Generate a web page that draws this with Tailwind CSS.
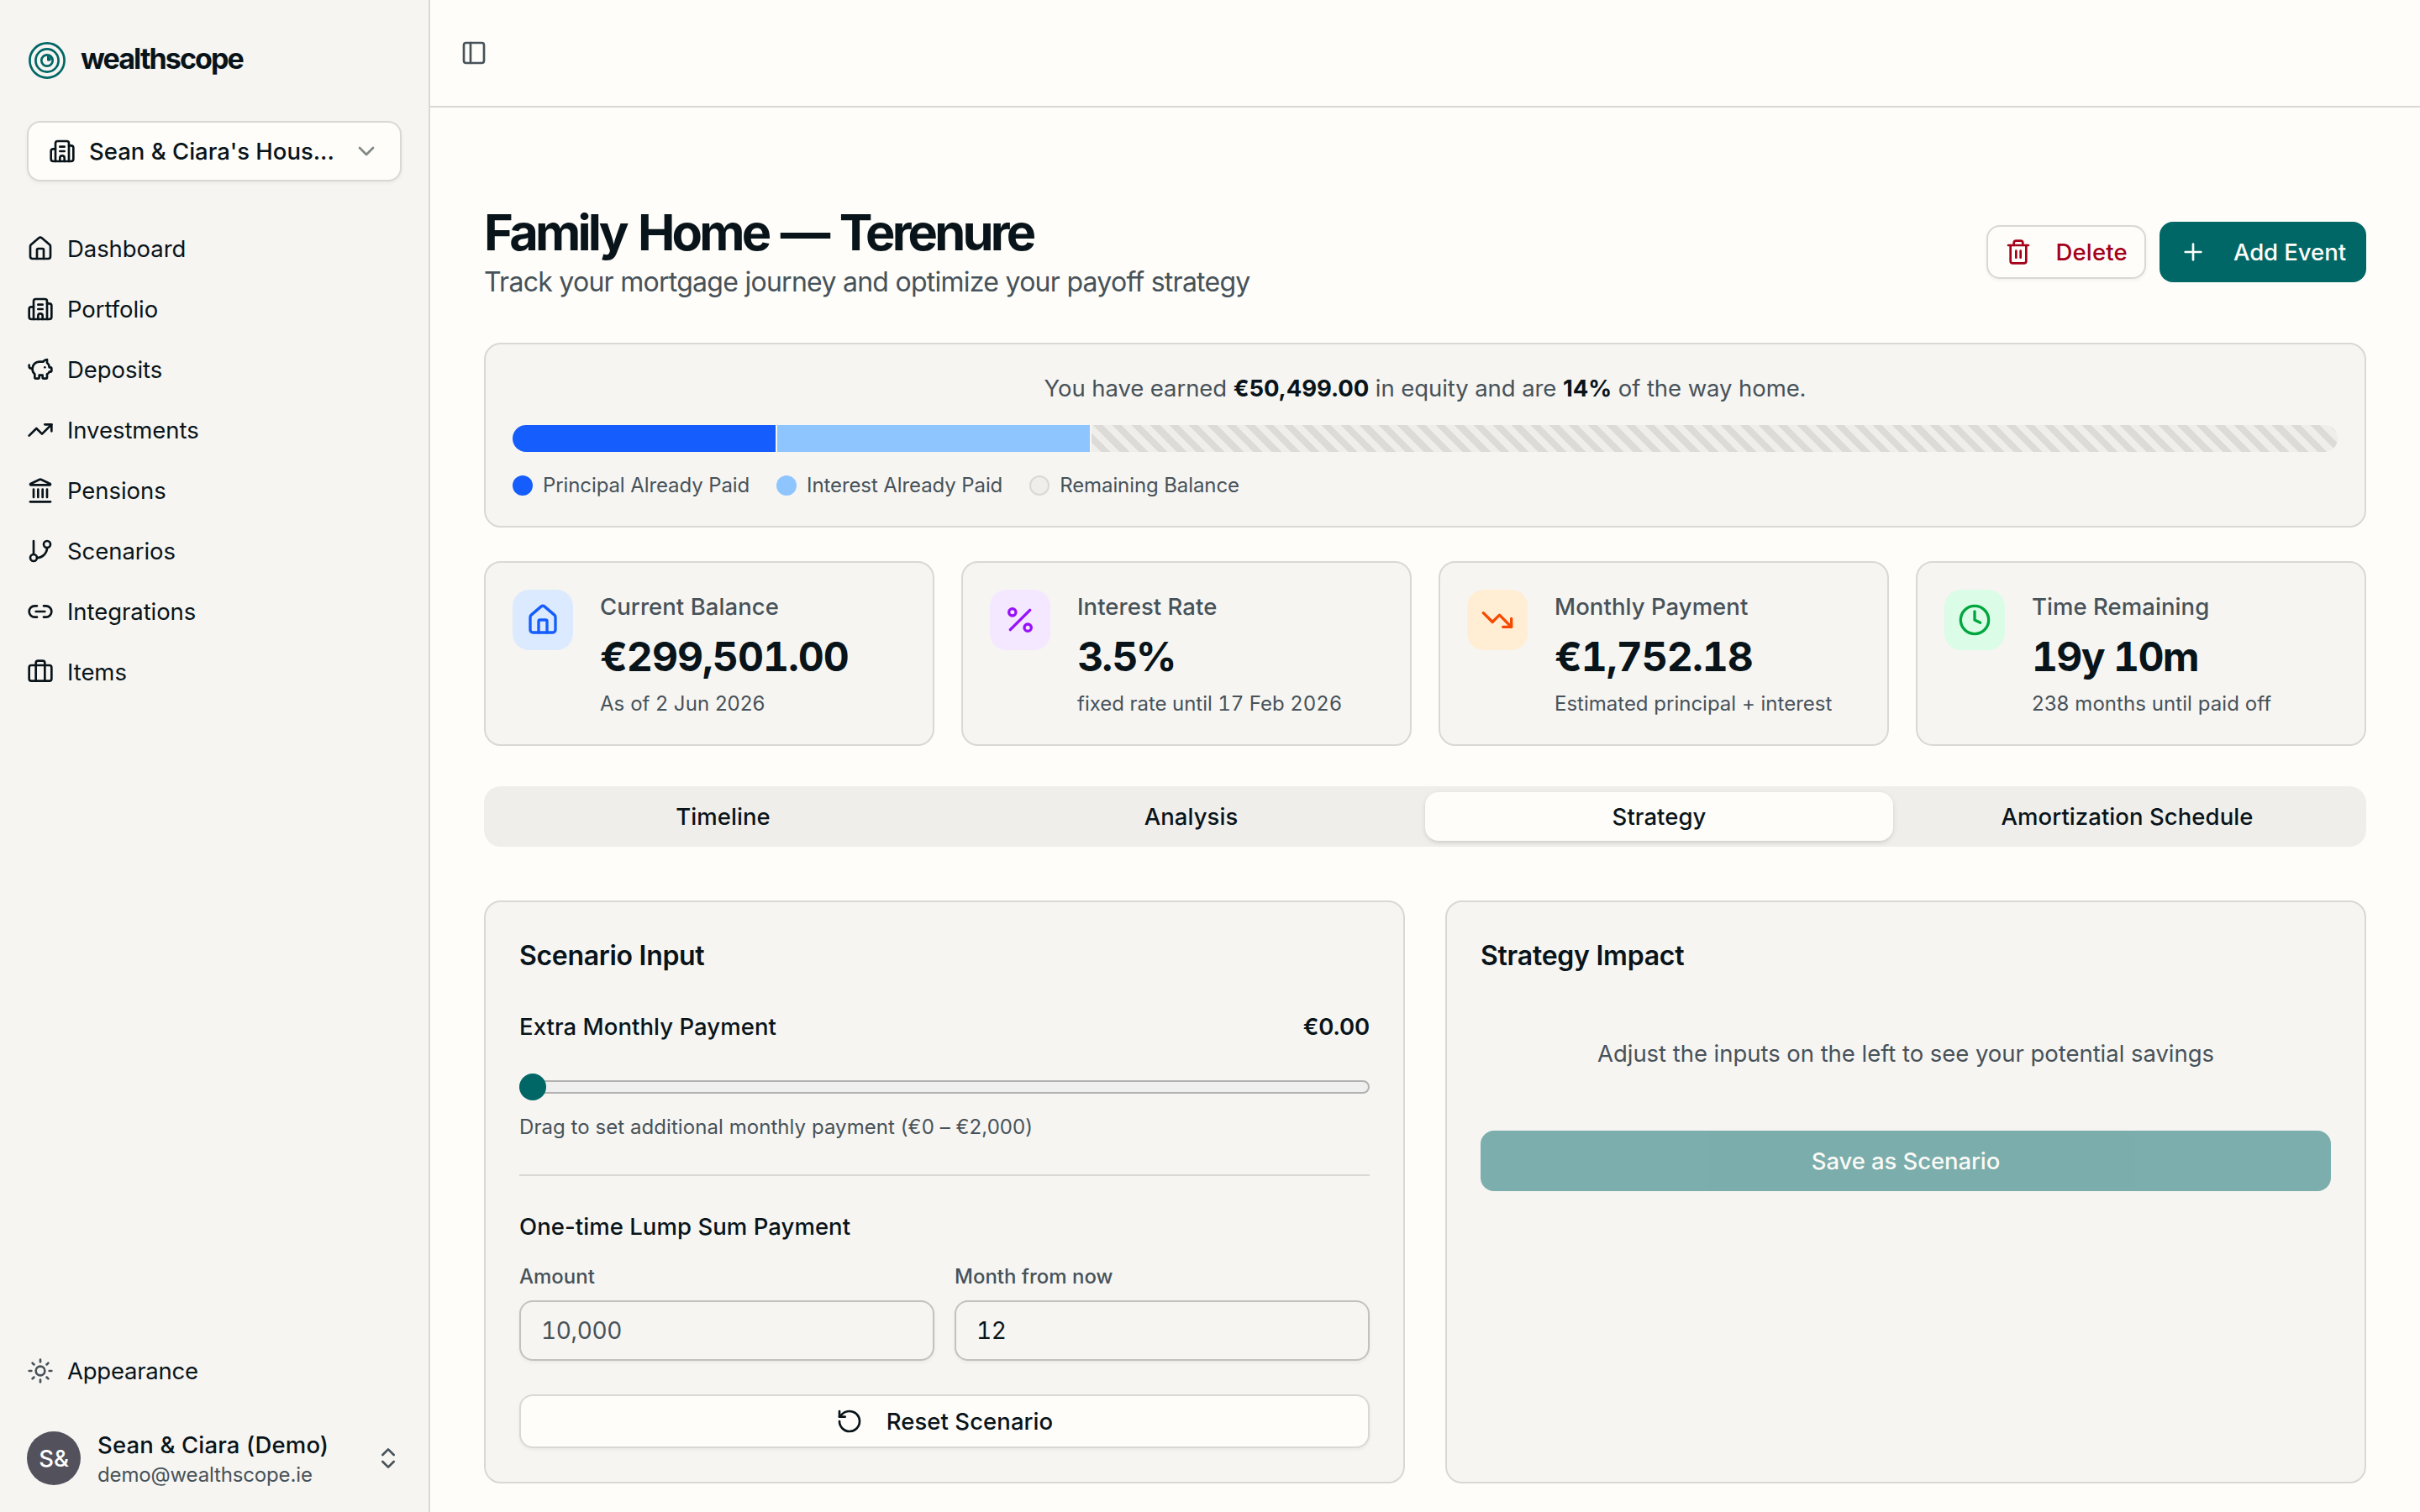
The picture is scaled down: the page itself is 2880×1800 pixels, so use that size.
<!DOCTYPE html>
<html lang="en">
<head>
    <meta charset="UTF-8">
    <meta name="viewport" content="width=device-width, initial-scale=1.0">
    <title>Family Home — Terenure | wealthscope</title>
    <script src="https://cdn.jsdelivr.net/npm/@tailwindcss/browser@4"></script>
</head>
<body class="flex h-screen overflow-hidden bg-[#fefdf9] font-['Inter',sans-serif] text-[27.5px] leading-10 tracking-[0.06px] text-[#09141a]">

    <!-- Sidebar -->
    <aside class="flex w-[512px] shrink-0 flex-col border-r-2 border-[#d9d8d4] bg-[#f6f5f2] px-8 pt-12 pb-6">
        <div class="flex h-12 items-center gap-4">
            <svg class="size-12" viewBox="0 0 48 48" fill="none" stroke="#006766" stroke-width="2.7">
                <circle cx="24" cy="24" r="20.6"/>
                <circle cx="24" cy="24" r="13.6"/>
                <circle cx="24" cy="24" r="6.7"/>
                <path d="M24 24V18.5a6 6 0 0 1 5.2 4.2A3.2 3.2 0 0 1 24 24z" fill="#006766" stroke="none"/>
            </svg>
            <span class="pb-1 text-[34px] font-bold tracking-[-1.9px]">wealthscope</span>
        </div>

        <button class="mt-12 flex h-18 items-center gap-4 rounded-2xl border-2 border-[#d9d8d4] bg-[#fefdf9] px-6 shadow-[0_2px_4px_rgb(0_0_0/0.05)]">
            <svg class="size-8 shrink-0" viewBox="0 0 24 24" fill="none" stroke="currentColor" stroke-width="2" stroke-linecap="round" stroke-linejoin="round"><path d="M10 12h4"/><path d="M10 8h4"/><path d="M14 21v-3a2 2 0 0 0-4 0v3"/><path d="M6 10H4a2 2 0 0 0-2 2v7a2 2 0 0 0 2 2h16a2 2 0 0 0 2-2V9a2 2 0 0 0-2-2h-2"/><path d="M6 21V5a2 2 0 0 1 2-2h8a2 2 0 0 1 2 2v16"/></svg>
            <span class="font-medium tracking-normal whitespace-nowrap">Sean &amp; Ciara's Hous...</span>
            <svg class="ml-auto size-8 shrink-0 opacity-50" viewBox="0 0 24 24" fill="none" stroke="currentColor" stroke-width="2" stroke-linecap="round" stroke-linejoin="round"><path d="m6 9 6 6 6-6"/></svg>
        </button>

        <nav class="mt-12 flex flex-col gap-2 tracking-[-0.06px]">
            <a class="flex h-16 items-center gap-4">
                <svg class="size-8" viewBox="0 0 24 24" fill="none" stroke="currentColor" stroke-width="2" stroke-linecap="round" stroke-linejoin="round"><path d="M15 21v-8a1 1 0 0 0-1-1h-4a1 1 0 0 0-1 1v8"/><path d="M3 10a2 2 0 0 1 .709-1.528l7-6a2 2 0 0 1 2.582 0l7 6A2 2 0 0 1 21 10v9a2 2 0 0 1-2 2H5a2 2 0 0 1-2-2z"/></svg>
                <span>Dashboard</span>
            </a>
            <a class="flex h-16 items-center gap-4">
                <svg class="size-8" viewBox="0 0 24 24" fill="none" stroke="currentColor" stroke-width="2" stroke-linecap="round" stroke-linejoin="round"><path d="M10 12h4"/><path d="M10 8h4"/><path d="M14 21v-3a2 2 0 0 0-4 0v3"/><path d="M6 10H4a2 2 0 0 0-2 2v7a2 2 0 0 0 2 2h16a2 2 0 0 0 2-2V9a2 2 0 0 0-2-2h-2"/><path d="M6 21V5a2 2 0 0 1 2-2h8a2 2 0 0 1 2 2v16"/></svg>
                <span>Portfolio</span>
            </a>
            <a class="flex h-16 items-center gap-4">
                <svg class="size-8" viewBox="0 0 24 24" fill="none" stroke="currentColor" stroke-width="2" stroke-linecap="round" stroke-linejoin="round"><path d="M11 17h3v2a1 1 0 0 0 1 1h2a1 1 0 0 0 1-1v-3a3.16 3.16 0 0 0 2-2h1a1 1 0 0 0 1-1v-2a1 1 0 0 0-1-1h-1a5 5 0 0 0-2-4V3a4 4 0 0 0-3.2 1.6l-.3.4H11a6 6 0 0 0-6 6v1a5 5 0 0 0 2 4v3a1 1 0 0 0 1 1h2a1 1 0 0 0 1-1z"/><path d="M16 10h.01"/><path d="M2 8v1a2 2 0 0 0 2 2h1"/></svg>
                <span>Deposits</span>
            </a>
            <a class="flex h-16 items-center gap-4">
                <svg class="size-8" viewBox="0 0 24 24" fill="none" stroke="currentColor" stroke-width="2" stroke-linecap="round" stroke-linejoin="round"><path d="M16 7h6v6"/><path d="m22 7-8.5 8.5-5-5L2 17"/></svg>
                <span>Investments</span>
            </a>
            <a class="flex h-16 items-center gap-4">
                <svg class="size-8" viewBox="0 0 24 24" fill="none" stroke="currentColor" stroke-width="2" stroke-linecap="round" stroke-linejoin="round"><path d="M10 18v-7"/><path d="M11.12 2.198a2 2 0 0 1 1.76.006l7.866 3.847c.476.233.31.949-.22.949H3.474c-.53 0-.695-.716-.22-.949z"/><path d="M14 18v-7"/><path d="M18 18v-7"/><path d="M3 22h18"/><path d="M6 18v-7"/></svg>
                <span>Pensions</span>
            </a>
            <a class="flex h-16 items-center gap-4">
                <svg class="size-8" viewBox="0 0 24 24" fill="none" stroke="currentColor" stroke-width="2" stroke-linecap="round" stroke-linejoin="round"><path d="M6 3v12"/><circle cx="18" cy="6" r="3"/><circle cx="6" cy="18" r="3"/><path d="M18 9a9 9 0 0 1-9 9"/></svg>
                <span>Scenarios</span>
            </a>
            <a class="flex h-16 items-center gap-4">
                <svg class="size-8" viewBox="0 0 24 24" fill="none" stroke="currentColor" stroke-width="2" stroke-linecap="round" stroke-linejoin="round"><path d="M9 17H7A5 5 0 0 1 7 7h2"/><path d="M15 7h2a5 5 0 1 1 0 10h-2"/><path d="M8 12h8"/></svg>
                <span>Integrations</span>
            </a>
            <a class="flex h-16 items-center gap-4">
                <svg class="size-8" viewBox="0 0 24 24" fill="none" stroke="currentColor" stroke-width="2" stroke-linecap="round" stroke-linejoin="round"><path d="M16 20V4a2 2 0 0 0-2-2h-4a2 2 0 0 0-2 2v16"/><rect width="20" height="14" x="2" y="6" rx="2"/></svg>
                <span>Items</span>
            </a>
        </nav>

        <a class="mt-auto mb-8 flex h-16 items-center gap-4">
            <svg class="size-8 text-[#475259]" viewBox="0 0 24 24" fill="none" stroke="currentColor" stroke-width="2" stroke-linecap="round" stroke-linejoin="round"><circle cx="12" cy="12" r="4"/><path d="M12 2v2"/><path d="M12 20v2"/><path d="m4.93 4.93 1.41 1.41"/><path d="m17.66 17.66 1.41 1.41"/><path d="M2 12h2"/><path d="M20 12h2"/><path d="m6.34 17.66-1.41 1.41"/><path d="m19.07 4.93-1.41 1.41"/></svg>
            <span class="tracking-[-0.25px]">Appearance</span>
        </a>

        <div class="flex h-20 items-center gap-5">
            <div class="flex size-16 items-center justify-center rounded-full bg-[#53525c] font-medium tracking-normal text-white">S&amp;</div>
            <div>
                <p class="font-medium tracking-[0.15px]">Sean &amp; Ciara (Demo)</p>
                <p class="text-[24px] leading-8 tracking-[-0.15px] text-[#475259]">demo@wealthscope.ie</p>
            </div>
            <svg class="ml-auto size-8 text-[#475259]" viewBox="0 0 24 24" fill="none" stroke="currentColor" stroke-width="2" stroke-linecap="round" stroke-linejoin="round"><path d="m7 15 5 5 5-5"/><path d="m7 9 5-5 5 5"/></svg>
        </div>
    </aside>

    <div class="flex min-w-0 grow flex-col">
        <header class="flex h-32 shrink-0 items-center border-b-2 border-[#d9d8d4] px-9">
            <svg class="size-8 text-[#475259]" viewBox="0 0 24 24" fill="none" stroke="currentColor" stroke-width="2" stroke-linecap="round" stroke-linejoin="round"><rect width="18" height="18" x="3" y="3" rx="2"/><path d="M9 3v18"/></svg>
        </header>

        <main class="flex flex-col px-16 pt-28">
            <!-- Title and actions -->
            <div class="flex h-[120px] items-center justify-between">
                <div>
                    <h1 class="text-[59.5px] leading-18 font-bold tracking-[-3.8px] [word-spacing:4px]">Family Home — Terenure</h1>
                    <p class="text-[32px] leading-12 tracking-[-0.73px] text-[#475259]">Track your mortgage journey and optimize your payoff strategy</p>
                </div>
                <div class="flex items-center gap-4">
                    <button class="flex h-16 items-center gap-7 rounded-2xl border-2 border-[#d9d8d4] bg-[#fefdf9] px-5 font-medium tracking-[0.2px] text-[#a30019] shadow-[0_2px_4px_rgb(0_0_0/0.05)]">
                        <svg class="size-8" viewBox="0 0 24 24" fill="none" stroke="currentColor" stroke-width="2" stroke-linecap="round" stroke-linejoin="round"><path d="M10 11v6"/><path d="M14 11v6"/><path d="M19 6v14a2 2 0 0 1-2 2H7a2 2 0 0 1-2-2V6"/><path d="M3 6h18"/><path d="M8 6V4a2 2 0 0 1 2-2h4a2 2 0 0 1 2 2v2"/></svg>
                        Delete
                    </button>
                    <button class="flex h-18 items-center gap-8 rounded-2xl bg-[#006766] px-6 font-medium tracking-[-0.05px] text-[#fefdf9]">
                        <svg class="size-8" viewBox="0 0 24 24" fill="none" stroke="currentColor" stroke-width="2" stroke-linecap="round" stroke-linejoin="round"><path d="M5 12h14"/><path d="M12 5v14"/></svg>
                        Add Event
                    </button>
                </div>
            </div>

            <!-- Equity progress -->
            <section class="mt-12 rounded-[20px] border-2 border-[#d9d8d4] bg-[#f6f5f2] p-8">
                <p class="text-center tracking-[-0.08px] text-[#475259]">You have earned <b class="font-bold text-[#09141a]">€50,499.00</b> in equity and are <b class="font-bold text-[#09141a]">14%</b> of the way home.</p>
                <div class="mt-6 flex h-8 gap-0.5 overflow-hidden rounded-full">
                    <div class="w-[313px] bg-blue-600"></div>
                    <div class="w-[372px] bg-blue-300"></div>
                    <div class="grow bg-[#f0eeea] bg-[repeating-linear-gradient(45deg,transparent_0_8px,#dcdbd7_8px_16px)]"></div>
                </div>
                <div class="mt-6 flex gap-8 text-[24px] leading-8 tracking-[-0.1px] text-[#475259]">
                    <div class="flex items-center gap-3"><i class="size-6 rounded-full bg-blue-600"></i>Principal Already Paid</div>
                    <div class="flex items-center gap-3"><i class="size-6 rounded-full bg-blue-300"></i>Interest Already Paid</div>
                    <div class="flex items-center gap-3"><i class="size-6 rounded-full border-2 border-[#d9d8d4] bg-[#f0eeea]"></i>Remaining Balance</div>
                </div>
            </section>

            <!-- Key figures -->
            <section class="mt-10 grid grid-cols-4 gap-8">
                <div class="flex gap-8 rounded-[20px] border-2 border-[#d9d8d4] bg-[#f6f5f2] p-8">
                    <div class="flex size-18 shrink-0 items-center justify-center rounded-[20px] bg-blue-100 text-blue-600">
                        <svg class="size-10" viewBox="0 0 24 24" fill="none" stroke="currentColor" stroke-width="2" stroke-linecap="round" stroke-linejoin="round"><path d="M15 21v-8a1 1 0 0 0-1-1h-4a1 1 0 0 0-1 1v8"/><path d="M3 10a2 2 0 0 1 .709-1.528l7-6a2 2 0 0 1 2.582 0l7 6A2 2 0 0 1 21 10v9a2 2 0 0 1-2 2H5a2 2 0 0 1-2-2z"/></svg>
                    </div>
                    <div>
                        <p class="font-medium text-[#475259]">Current Balance</p>
                        <p class="mt-2 text-[48px] leading-16 font-bold tracking-[-1px] tabular-nums">€299,501.00</p>
                        <p class="mt-2 text-[24px] leading-8 text-[#475259]">As of 2 Jun 2026</p>
                    </div>
                </div>
                <div class="flex gap-8 rounded-[20px] border-2 border-[#d9d8d4] bg-[#f6f5f2] p-8">
                    <div class="flex size-18 shrink-0 items-center justify-center rounded-[20px] bg-purple-100 text-purple-600">
                        <svg class="size-10" viewBox="0 0 24 24" fill="none" stroke="currentColor" stroke-width="2" stroke-linecap="round" stroke-linejoin="round"><path d="M19 5 5 19"/><circle cx="6.5" cy="6.5" r="2.5"/><circle cx="17.5" cy="17.5" r="2.5"/></svg>
                    </div>
                    <div>
                        <p class="font-medium text-[#475259]">Interest Rate</p>
                        <p class="mt-2 text-[48px] leading-16 font-bold tracking-[-2.2px]">3.5%</p>
                        <p class="mt-2 text-[24px] leading-8 tracking-normal tabular-nums text-[#475259]">fixed rate until 17 Feb 2026</p>
                    </div>
                </div>
                <div class="flex gap-8 rounded-[20px] border-2 border-[#d9d8d4] bg-[#f6f5f2] p-8">
                    <div class="flex size-18 shrink-0 items-center justify-center rounded-[20px] bg-orange-100 text-orange-600">
                        <svg class="size-10" viewBox="0 0 24 24" fill="none" stroke="currentColor" stroke-width="2" stroke-linecap="round" stroke-linejoin="round"><path d="M16 17h6v-6"/><path d="m22 17-8.5-8.5-5 5L2 7"/></svg>
                    </div>
                    <div>
                        <p class="font-medium text-[#475259]">Monthly Payment</p>
                        <p class="mt-2 text-[48px] leading-16 font-bold tracking-[-1px] tabular-nums">€1,752.18</p>
                        <p class="mt-2 text-[24px] leading-8 tracking-normal text-[#475259]">Estimated principal + interest</p>
                    </div>
                </div>
                <div class="flex gap-8 rounded-[20px] border-2 border-[#d9d8d4] bg-[#f6f5f2] p-8">
                    <div class="flex size-18 shrink-0 items-center justify-center rounded-[20px] bg-green-100 text-green-600">
                        <svg class="size-10" viewBox="0 0 24 24" fill="none" stroke="currentColor" stroke-width="2" stroke-linecap="round" stroke-linejoin="round"><circle cx="12" cy="12" r="10"/><path d="M12 6v6l4 2"/></svg>
                    </div>
                    <div>
                        <p class="font-medium text-[#475259]">Time Remaining</p>
                        <p class="mt-2 text-[48px] leading-16 font-bold tracking-[-1.7px] tabular-nums">19y 10m</p>
                        <p class="mt-2 text-[24px] leading-8 text-[#475259]">238 months until paid off</p>
                    </div>
                </div>
            </section>

            <!-- Tabs -->
            <div class="mt-12 grid h-18 grid-cols-4 rounded-[20px] bg-[#f0eeea] px-1.5 py-[7px] text-center leading-[58px] font-medium">
                <div>Timeline</div>
                <div>Analysis</div>
                <div class="rounded-2xl bg-[#fefdf9] shadow-[0_2px_6px_rgb(0_0_0/0.1),0_2px_4px_-2px_rgb(0_0_0/0.1)]">Strategy</div>
                <div>Amortization Schedule</div>
            </div>

            <!-- Strategy panels -->
            <section class="mt-16 grid h-[694px] grid-cols-2 gap-12">
                <div class="flex flex-col rounded-[20px] border-2 border-[#d9d8d4] bg-[#f6f5f2] p-10">
                    <h2 class="text-[32px] leading-12 font-semibold tracking-[-0.3px]">Scenario Input</h2>
                    <div class="mt-10 flex justify-between">
                        <span class="font-medium">Extra Monthly Payment</span>
                        <span class="font-semibold tracking-[-0.2px]">€0.00</span>
                    </div>
                    <div class="mt-9 flex h-8 items-center">
                        <div class="z-10 size-8 rounded-full bg-[#006766]"></div>
                        <div class="-ml-8 h-4 grow rounded-full border-2 border-[#b2b2b2] bg-[#efefef]"></div>
                    </div>
                    <p class="mt-4 text-[24px] leading-8 tracking-[0.06px] text-[#475259]">Drag to set additional monthly payment (€0 – €2,000)</p>
                    <div class="mt-10 h-0.5 bg-[#d9d8d4]"></div>
                    <h3 class="mt-10 font-medium">One-time Lump Sum Payment</h3>
                    <div class="mt-6 grid grid-cols-2 gap-6">
                        <label>
                            <span class="block text-[24px] leading-8 font-medium tracking-normal text-[#475259]">Amount</span>
                            <span class="mt-3 flex h-18 items-center rounded-2xl border-2 border-[#c2c1be] px-6 text-[28px] tracking-[-0.4px] tabular-nums text-[#475259] shadow-[0_2px_4px_rgb(0_0_0/0.05)]">10,000</span>
                        </label>
                        <label>
                            <span class="block text-[24px] leading-8 font-medium tracking-normal text-[#475259]">Month from now</span>
                            <span class="mt-3 flex h-18 items-center rounded-2xl border-2 border-[#c2c1be] px-6 text-[28px] tracking-[-0.4px] tabular-nums shadow-[0_2px_4px_rgb(0_0_0/0.05)]">12</span>
                        </label>
                    </div>
                    <button class="mt-10 flex h-16 items-center justify-center gap-7 rounded-2xl border-2 border-[#d9d8d4] bg-[#fefdf9] font-medium shadow-[0_2px_4px_rgb(0_0_0/0.05)]">
                        <svg class="size-8" viewBox="0 0 24 24" fill="none" stroke="currentColor" stroke-width="2" stroke-linecap="round" stroke-linejoin="round"><path d="M3 12a9 9 0 1 0 9-9 9.75 9.75 0 0 0-6.74 2.74L3 8"/><path d="M3 3v5h5"/></svg>
                        Reset Scenario
                    </button>
                </div>

                <div class="flex flex-col rounded-[20px] border-2 border-[#d9d8d4] bg-[#f6f5f2] p-10">
                    <h2 class="text-[32px] leading-12 font-semibold tracking-[-0.25px]">Strategy Impact</h2>
                    <p class="mt-18 text-center tracking-[-0.04px] text-[#475259]">Adjust the inputs on the left to see your potential savings</p>
                    <button class="mt-18 h-18 rounded-2xl bg-[#006766] font-medium tracking-[-0.1px] text-[#fefdf9] opacity-50">Save as Scenario</button>
                </div>
            </section>
        </main>
    </div>
</body>
</html>
